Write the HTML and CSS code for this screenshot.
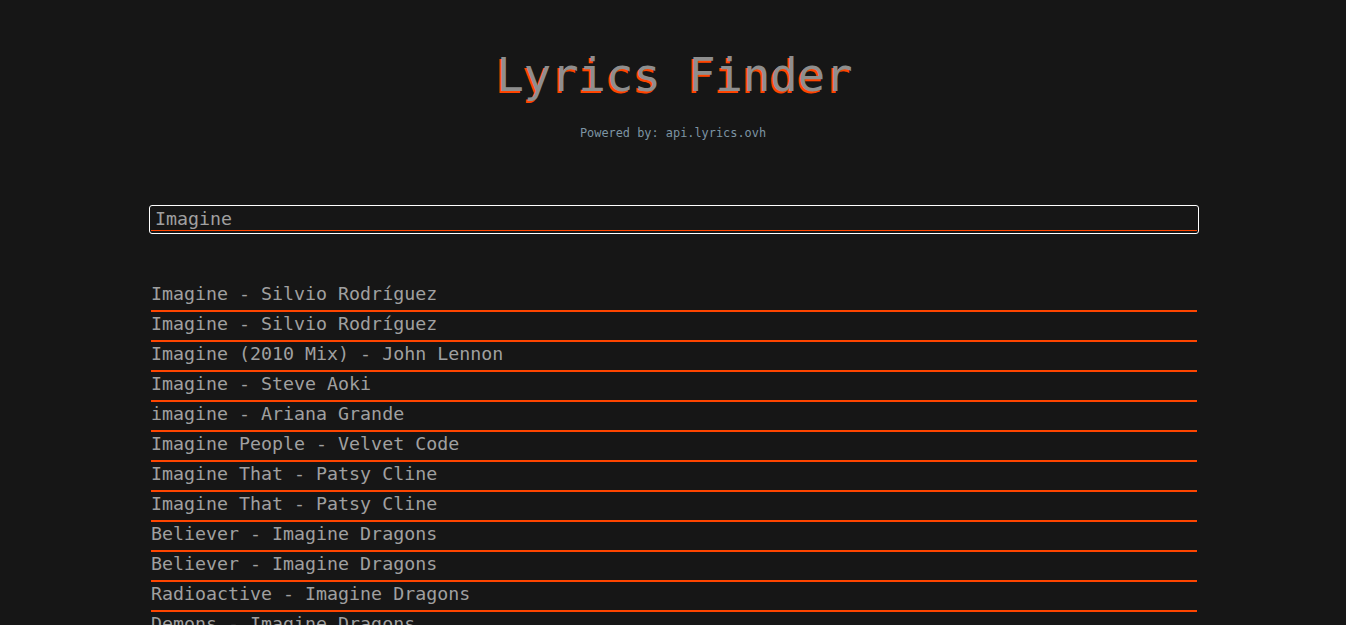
FILE: index.html
```html
<!DOCTYPE html>
<html lang="en">
<head>
<meta charset="utf-8">
<title>Lyrics Finder</title>
<link rel="stylesheet" href="styles.css">
</head>
<body>
<header class="header">
  <h1 class="title">Lyrics Finder</h1>
  <p class="powered">Powered by: api.lyrics.ovh</p>
</header>
<main class="main">
  <div class="search">
    <div class="search-input" role="textbox">Imagine</div>
  </div>
  <ul class="results">
    <li class="result">Imagine - Silvio Rodríguez</li>
    <li class="result">Imagine - Silvio Rodríguez</li>
    <li class="result">Imagine (2010 Mix) - John Lennon</li>
    <li class="result">Imagine - Steve Aoki</li>
    <li class="result">imagine - Ariana Grande</li>
    <li class="result">Imagine People - Velvet Code</li>
    <li class="result">Imagine That - Patsy Cline</li>
    <li class="result">Imagine That - Patsy Cline</li>
    <li class="result">Believer - Imagine Dragons</li>
    <li class="result">Believer - Imagine Dragons</li>
    <li class="result">Radioactive - Imagine Dragons</li>
    <li class="result">Demons - Imagine Dragons</li>
  </ul>
</main>
</body>
</html>
```
FILE: styles.css
```css
html, body {
  margin: 0;
  padding: 0;
  background: #161616;
  overflow: hidden;
}
body {
  font-family: "DejaVu Sans Mono", "Liberation Mono", monospace;
  color: #a0a0a0;
}
.header {
  display: flex;
  flex-direction: column;
  align-items: center;
  padding-top: 49px;
}
.title {
  margin: 0;
  font-size: 45.5px;
  font-weight: normal;
  line-height: normal;
  color: #8e8e8e;
  text-shadow: -2px 2px 0 #ff4500;
  padding-left: 3px;
}
.powered {
  margin: 24px 0 0;
  font-size: 11.9px;
  line-height: normal;
  color: #7d94a3;
}
.main {
  width: 1050px;
  margin: 65px 0 0 149px;
}
.search {
  border: 1px solid #ffffff;
  border-radius: 3px;
  padding: 1px 1px 2px;
}
.search-input {
  height: 23px;
  padding: 0 4px;
  border-bottom: 1px solid #ff4500;
  color: #a0a0a0;
  font-size: 18.3px;
  line-height: 23px;
  white-space: nowrap;
}
.results {
  list-style: none;
  margin: 48px 0 0;
  padding: 0 2px;
}
.result {
  font-size: 18.3px;
  line-height: 24px;
  padding-bottom: 4px;
  border-bottom: 2px solid #ff4500;
  color: #a0a0a0;
}
```
